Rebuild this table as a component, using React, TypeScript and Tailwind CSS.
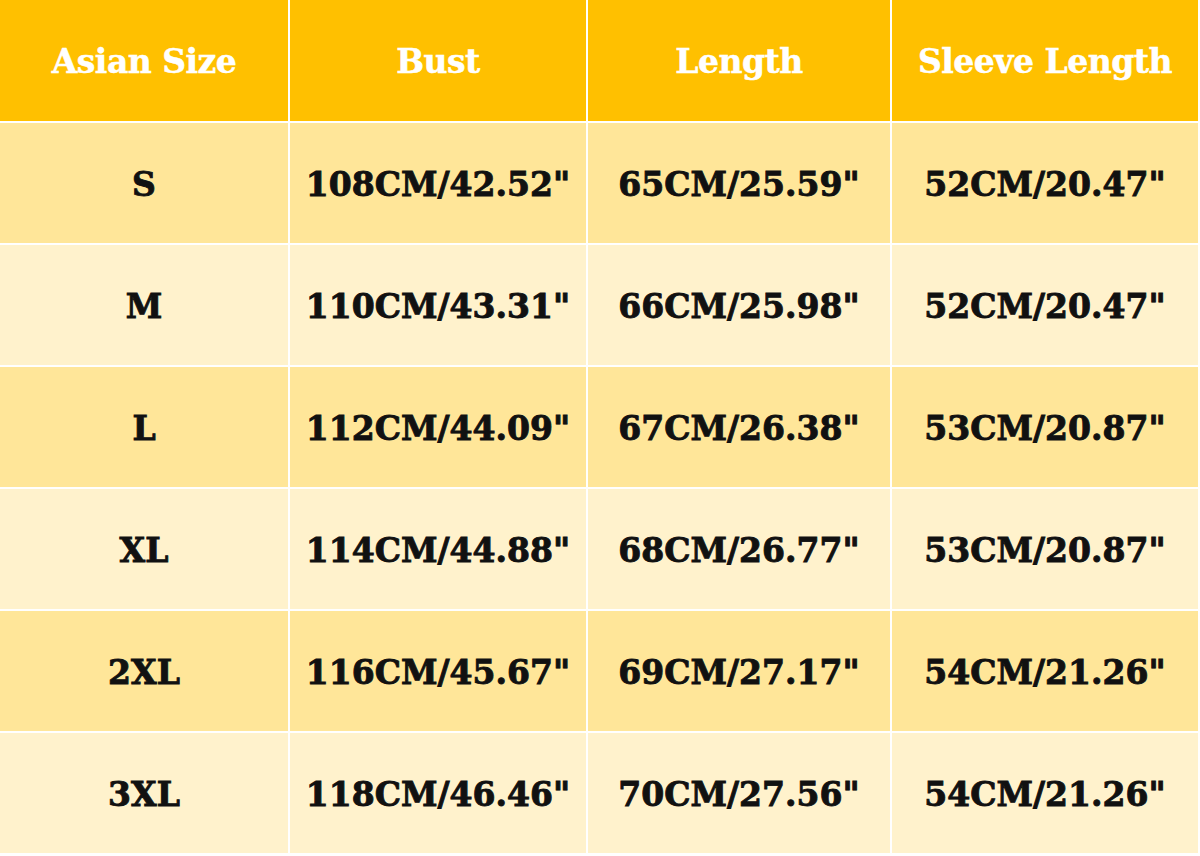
const headers = ["Asian Size", "Bust", "Length", "Sleeve Length"];

const rows = [
  ["S", "108CM/42.52\"", "65CM/25.59\"", "52CM/20.47\""],
  ["M", "110CM/43.31\"", "66CM/25.98\"", "52CM/20.47\""],
  ["L", "112CM/44.09\"", "67CM/26.38\"", "53CM/20.87\""],
  ["XL", "114CM/44.88\"", "68CM/26.77\"", "53CM/20.87\""],
  ["2XL", "116CM/45.67\"", "69CM/27.17\"", "54CM/21.26\""],
  ["3XL", "118CM/46.46\"", "70CM/27.56\"", "54CM/21.26\""],
];

export default function App() {
  return (
    <div className="h-[856px] w-[1200px] bg-white" style={{ fontFamily: '"DejaVu Serif", serif' }}>
      <div className="grid h-[853px] w-[1198px] grid-cols-[288px_296px_302px_1fr] grid-rows-[121px_repeat(6,1fr)] gap-[2px] bg-white font-bold">
        {headers.map((h) => (
          <div
            key={h}
            className="flex items-center justify-center bg-[#ffc000] pt-[3px] text-[33px] tracking-[-0.5px] text-white [-webkit-text-stroke:0.5px_#fff]"
          >
            {h}
          </div>
        ))}
        {rows.map((row, i) =>
          row.map((cell, j) => (
            <div
              key={`${i}-${j}`}
              className={`flex items-center justify-center pt-[3px] text-[33px] text-[#111] [-webkit-text-stroke:0.9px_#111] ${
                i % 2 === 0 ? "bg-[#ffe699]" : "bg-[#fff2cc]"
              }`}
            >
              {cell}
            </div>
          )),
        )}
      </div>
    </div>
  );
}
